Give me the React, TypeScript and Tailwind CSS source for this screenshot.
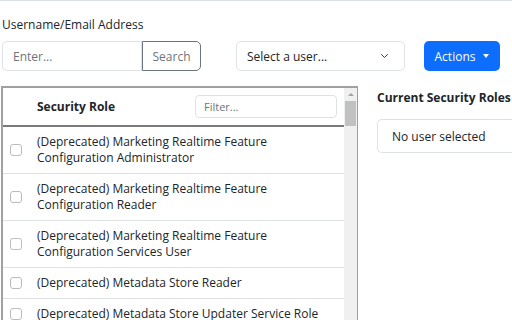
import { useState } from "react";

const roles = [
  "(Deprecated) Marketing Realtime Feature Configuration Administrator",
  "(Deprecated) Marketing Realtime Feature Configuration Reader",
  "(Deprecated) Marketing Realtime Feature Configuration Services User",
  "(Deprecated) Metadata Store Reader",
  "(Deprecated) Metadata Store Updater Service Role",
  "(Deprecated) Microsoft Teams Service Role",
];

const App = () => {
  const [checked, setChecked] = useState<Record<number, boolean>>({});

  return (
    <div
      className="w-[512px] h-[320px] overflow-hidden bg-white border-t border-[#dee2e6] text-[#212529] text-[12px] leading-[19px]"
      style={{ fontFamily: '"Segoe UI", "Open Sans", sans-serif' }}
    >
      <div className="pl-[2px] pt-[14px]">
        <label className="block">Username/Email Address</label>
      </div>

      <div className="flex items-center pl-[2px] mt-[7px] h-[30px]">
        <div className="flex h-[30px] shrink-0">
          <input
            className="w-[140px] h-[30px] border border-[#dee2e6] rounded-l-[5px] px-[10px] text-[12px] placeholder-[#6c757d] outline-none"
            placeholder="Enter..."
          />
          <button className="w-[59px] h-[30px] border border-[#6c757d] rounded-r-[5px] text-[#6c757d] text-[12px]">
            Search
          </button>
        </div>
        <button className="ml-[35px] shrink-0 w-[169px] h-[30px] border border-[#dee2e6] rounded-[5px] flex items-center justify-between pl-[10px] pr-[14px]">
          <span>Select a user...</span>
          <svg width="11" height="8" viewBox="0 0 16 16" fill="none" stroke="#343a40" strokeWidth="2" strokeLinecap="round" strokeLinejoin="round">
            <path d="M2 5l6 6 6-6" />
          </svg>
        </button>
        <button className="ml-[19px] shrink-0 w-[76px] h-[30px] rounded-[5px] bg-[#0d6efd] text-white flex items-center justify-center gap-[8px]">
          <span>Actions</span>
          <span className="w-0 h-0 border-l-[3.5px] border-r-[3.5px] border-t-[4px] border-l-transparent border-r-transparent border-t-white" />
        </button>
      </div>

      <div className="flex mt-[15px] pl-[1px]">
        <div className="w-[357px] shrink-0 h-[240px] overflow-hidden border-2 border-r border-b-0 border-[#a0a0a0] flex">
          <div className="flex-1 flex flex-col">
            <div className="flex shrink-0 items-center h-[39px] border-b-2 border-[#7a7a7a]">
              <div className="w-[34px]" />
              <div className="flex-1 font-bold">Security Role</div>
              <input
                className="w-[142px] h-[23px] mr-[7px] border border-[#dee2e6] rounded-[4px] px-[8px] text-[11px] placeholder-[#6c757d] outline-none"
                placeholder="Filter..."
              />
            </div>
            {roles.map((role, i) => (
              <div key={i} className="flex shrink-0 items-center border-b border-[#dee2e6] py-[7px]">
                <div className="w-[34px] flex pl-[7px]">
                  <input
                    type="checkbox"
                    checked={!!checked[i]}
                    onChange={() => setChecked({ ...checked, [i]: !checked[i] })}
                    className="appearance-none w-[12px] h-[12px] border border-[#b8bcc0] rounded-[3px] bg-white"
                  />
                </div>
                <div className="flex-1 pr-[10px] leading-[16px]">{role}</div>
              </div>
            ))}
          </div>
          <div className="w-[13px] shrink-0 bg-[#f0f0f0] flex flex-col items-center">
            <div className="h-[13px] flex items-center justify-center">
              <span className="w-0 h-0 border-l-[3px] border-r-[3px] border-b-[3px] border-l-transparent border-r-transparent border-b-[#a3a3a3]" />
            </div>
            <div className="w-[11px] h-[25px] bg-[#c1c1c1]" />
          </div>
        </div>

        <div className="ml-[19px] pt-[2px] flex-1 min-w-0">
          <h3 className="font-bold whitespace-nowrap">Current Security Roles</h3>
          <div className="mt-[12px] h-[34px] border border-[#dee2e6] border-r-0 rounded-l-[5px] flex items-center pl-[14px] whitespace-nowrap">
            No user selected
          </div>
        </div>
      </div>
    </div>
  );
};

export default App;
